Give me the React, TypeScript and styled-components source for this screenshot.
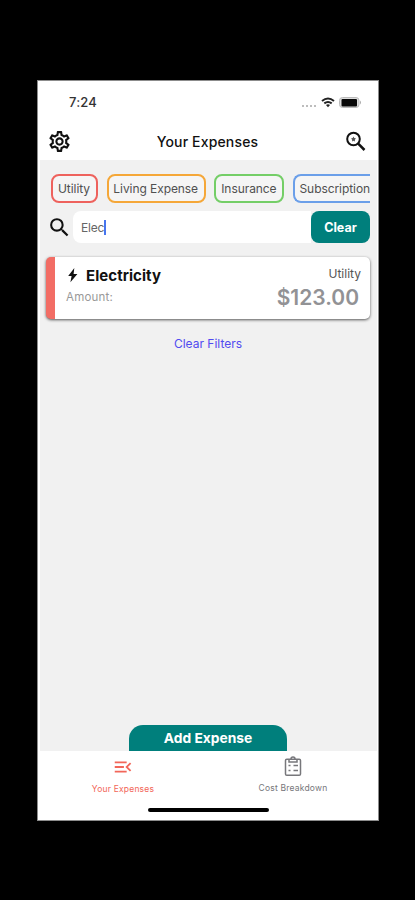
import React from "react";
import styled, { createGlobalStyle } from "styled-components";
import { MdMenuOpen, MdOutlineSettings, MdSearch } from "react-icons/md";

const GlobalStyle = createGlobalStyle`
  * { box-sizing: border-box; }
  body { margin: 0; background: #000; font-family: Inter, "Liberation Sans", sans-serif; }
`;

const Stage = styled.div`
  height: 900px;
  padding: 80px 36px 79px 37px;
  background: #000;
`;

const Phone = styled.main`
  display: flex;
  flex-direction: column;
  height: 741px;
  background: #fff;
  border: 1px solid #8c8c8c;
  overflow: hidden;
`;

const StatusBar = styled.div`
  display: flex;
  align-items: center;
  justify-content: space-between;
  height: 42px;
  padding: 0 16px 0 31px;
`;

const Time = styled.span`
  font-size: 13px;
  font-weight: 500;
  color: #333;
  letter-spacing: 0.15px;
`;

const StatusIcons = styled.div`
  display: flex;
  align-items: center;
  gap: 4px;
`;

const Header = styled.header`
  display: grid;
  grid-template-columns: 24px 1fr 24px;
  align-items: center;
  height: 37px;
  padding: 0 10px 0 9px;
  color: #111;
  svg { display: block; }
`;

const Title = styled.h1`
  margin: 0;
  text-align: center;
  font-size: 14px;
  font-weight: 500;
  letter-spacing: 0.16px;
`;

const Content = styled.section`
  display: flex;
  flex-direction: column;
  flex: 1;
  margin: 0 1px 0 2px;
  padding: 14px 7px 0 6px;
  background: #f1f1f1;
`;

const Chips = styled.div`
  display: flex;
  gap: 8.7px;
  padding-left: 5px;
  overflow: hidden;
  flex: none;
`;

const Chip = styled.button<{ $color: string; $width: number; $open?: boolean }>`
  flex: none;
  width: ${(p) => p.$width}px;
  height: 29px;
  padding: 0 1px 0 0;
  border: 2px solid ${(p) => p.$color};
  border-right-width: ${(p) => (p.$open ? 0 : 2)}px;
  border-radius: ${(p) => (p.$open ? "8px 0 0 8px" : "8px")};
  background: #f5f5f5;
  color: #505050;
  font: 400 12px Inter, sans-serif;
  letter-spacing: -0.07px;
  text-align: ${(p) => (p.$open ? "right" : "center")};
  white-space: nowrap;
`;

const SearchRow = styled.div`
  display: flex;
  align-items: center;
  height: 32px;
  margin-top: 8px;
  svg { flex: none; margin-left: 1px; }
`;

const SearchField = styled.div`
  display: flex;
  align-items: center;
  flex: 1;
  height: 32px;
  margin-left: 1px;
  padding-left: 8px;
  border-radius: 8px 0 0 8px;
  background: #fff;
  color: #666;
  font-size: 12px;
  letter-spacing: -0.2px;
`;

const Caret = styled.i`
  width: 2px;
  height: 15px;
  background: #4775ee;
`;

const ClearButton = styled.button`
  width: 59px;
  height: 32px;
  padding: 0;
  border: 0;
  border-radius: 8px;
  background: #007f7c;
  color: #fff;
  font: 700 12.5px Inter, sans-serif;
`;

const Card = styled.article`
  display: flex;
  flex-direction: column;
  height: 62px;
  margin-top: 14px;
  padding: 8px 9px 0 11px;
  border-left: 9px solid #f26d65;
  border-radius: 5px;
  background: #fff;
  box-shadow: 0 1px 3px rgba(0, 0, 0, 0.65);
`;

const CardLine = styled.div`
  display: flex;
  justify-content: space-between;
  height: 20px;
`;

const Name = styled.h2`
  display: flex;
  align-items: center;
  gap: 5px;
  margin: 0;
  font-size: 15px;
  font-weight: 700;
  letter-spacing: 0.05px;
  color: #111;
`;

const Category = styled.span`
  font-size: 12px;
  line-height: 17px;
  color: #555;
`;

const AmountLabel = styled.span`
  font-size: 11.5px;
  line-height: 24px;
  color: #999;
  letter-spacing: 0.2px;
`;

const Amount = styled.strong`
  margin-right: 2px;
  font-size: 21px;
  font-weight: 600;
  line-height: 25px;
  color: #929295;
`;

const FilterLink = styled.button`
  align-self: center;
  margin-top: 17px;
  padding: 0;
  border: 0;
  background: none;
  color: #514bf0;
  font: 400 12px/15px Inter, sans-serif;
`;

const AddButton = styled.button`
  align-self: center;
  width: 158px;
  height: 26px;
  margin-top: auto;
  padding: 0;
  border: 0;
  border-radius: 14px 14px 0 0;
  background: #007f7c;
  color: #fff;
  font: 700 13.8px Inter, sans-serif;
`;

const TabBar = styled.nav`
  display: grid;
  grid-template-columns: 1fr 1fr;
  height: 57px;
  padding-top: 5px;
`;

const Tab = styled.button<{ $active?: boolean }>`
  display: flex;
  flex-direction: column;
  align-items: center;
  gap: 6px;
  padding: 0;
  border: 0;
  background: none;
  color: ${(p) => (p.$active ? "#f26659" : "#77777b")};
  font: 400 8.5px/11px Inter, sans-serif;
  letter-spacing: 0.2px;
  svg { flex: none; }
`;

const HomeIndicator = styled.div`
  align-self: center;
  width: 121px;
  height: 4px;
  margin: 0 0 8px;
  border-radius: 2px;
  background: #000;
`;

const categories = [
  { label: "Utility", color: "#ee625d", width: 47 },
  { label: "Living Expense", color: "#f5a738", width: 99 },
  { label: "Insurance", color: "#74ce67", width: 70 },
  { label: "Subscription", color: "#6b9fe9", width: 78, open: true },
];

const SignalDots = () => (
  <svg width="16" height="12" fill="#bdbdbd">
    <path d="M1 9h2v2H1zM5 9h2v2H5zM9 9h2v2H9zM13 9h2v2h-2z" />
  </svg>
);

const Wifi = () => (
  <svg width="14" height="11" viewBox="0 0 14 11" fill="none" stroke="#222" strokeWidth="2">
    <path d="M1 4Q7-1 13 4M3.3 6.4Q7 3.5 10.7 6.4" />
    <path d="M5 8q2-1.5 4 0L7 10.3z" fill="#222" stroke="none" />
  </svg>
);

const Battery = () => (
  <svg width="23" height="11" viewBox="0 0 23 11">
    <rect x=".5" y=".5" width="19.5" height="10" rx="3" fill="#ddd" stroke="#bbb" />
    <rect x="2.5" y="2" width="15.5" height="7.5" rx="1" fill="#080808" />
    <path d="M21 3.5q2 2 0 4z" fill="#aaa" />
  </svg>
);

const SearchMark = () => (
  <svg width="24" height="24" viewBox="0 0 24 24" fill="none" stroke="currentColor">
    <circle cx="9.5" cy="9" r="6.3" strokeWidth="2" />
    <path d="m14.2 13.7 6.3 6.3" strokeWidth="2.5" />
    <path d="m9.5 6.5.8 1.6 1.7.3-1.2 1.3.2 1.8-1.5-.8-1.5.8.2-1.8L7 8.4l1.7-.3z" fill="#555" stroke="none" />
  </svg>
);

const Bolt = () => (
  <svg width="15" height="16" viewBox="0 0 15 16" fill="#111">
    <path d="M8.3 1 2.2 9h3.4l-1.2 6.2L11.4 7H7.6z" />
  </svg>
);

const ClipboardList = () => (
  <svg width="20" height="21" viewBox="0 0 20 21" fill="none" stroke="currentColor" strokeWidth="1.5">
    <rect x="2.5" y="3.2" width="15" height="16" rx="1.3" />
    <path d="M6 3.5V6h8V3.5M8 3a2 2 0 0 1 4 0M10.5 9.5H15M10.5 14.5H15M5.5 9.5h2M5.5 14.5h2" />
  </svg>
);

export default function App() {
  return (
    <Stage>
      <GlobalStyle />
      <Phone>
        <StatusBar>
          <Time>7:24</Time>
          <StatusIcons>
            <SignalDots />
            <Wifi />
            <Battery />
          </StatusIcons>
        </StatusBar>
        <Header>
          <MdOutlineSettings size={25} />
          <Title>Your Expenses</Title>
          <SearchMark />
        </Header>
        <Content>
          <Chips>
            {categories.map((c) => (
              <Chip key={c.label} $color={c.color} $width={c.width} $open={c.open}>{c.label}</Chip>
            ))}
          </Chips>
          <SearchRow>
            <MdSearch size={25} color="#111" />
            <SearchField>Elec<Caret /></SearchField>
            <ClearButton>Clear</ClearButton>
          </SearchRow>
          <Card>
            <CardLine>
              <Name><Bolt />Electricity</Name>
              <Category>Utility</Category>
            </CardLine>
            <CardLine>
              <AmountLabel>Amount:</AmountLabel>
              <Amount>$123.00</Amount>
            </CardLine>
          </Card>
          <FilterLink>Clear Filters</FilterLink>
          <AddButton>Add Expense</AddButton>
        </Content>
        <TabBar>
          <Tab $active><MdMenuOpen size={22} />Your Expenses</Tab>
          <Tab><ClipboardList />Cost Breakdown</Tab>
        </TabBar>
        <HomeIndicator />
      </Phone>
    </Stage>
  );
}
